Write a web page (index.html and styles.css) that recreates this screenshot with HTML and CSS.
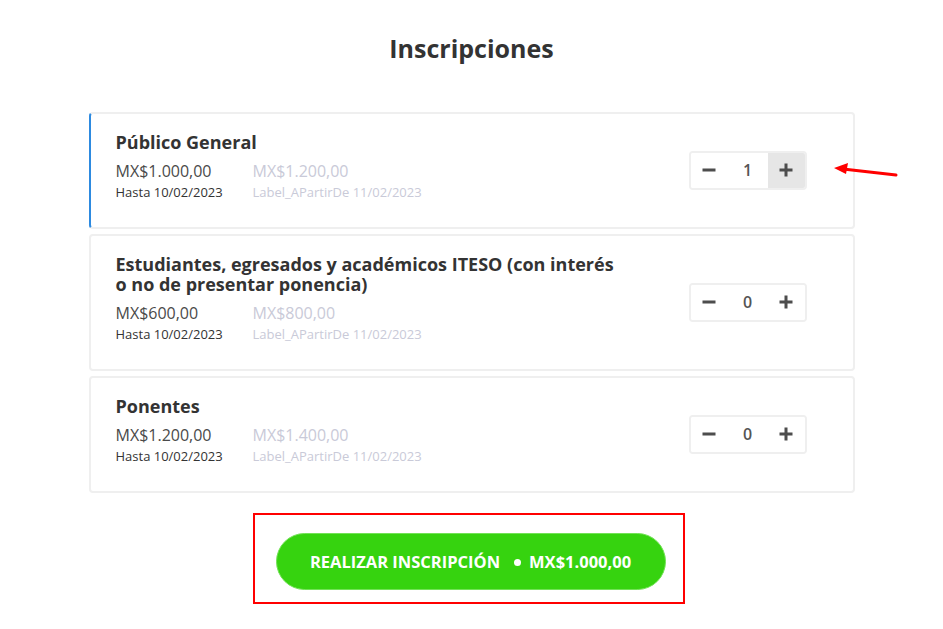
FILE: index.html
```html
<!DOCTYPE html>
<html lang="es">
<head>
    <meta charset="UTF-8">
    <meta name="viewport" content="width=device-width, initial-scale=1.0">
    <title>Inscripciones</title>
    <link rel="stylesheet" href="styles.css">
</head>
<body>
    <div class="container">
        <h1>Inscripciones</h1>

        <!-- Lista de tipos de boleto -->
        <div class="tickets">
            <div class="ticket selected">
                <div class="info">
                    <h3>Público General</h3>
                    <div class="prices">
                        <span class="price">MX$1.000,00</span>
                        <span class="price later">MX$1.200,00</span>
                    </div>
                    <div class="dates">
                        <span class="date">Hasta 10/02/2023</span>
                        <span class="date later">Label_APartirDe 11/02/2023</span>
                    </div>
                </div>
                <div class="stepper">
                    <button class="step minus"></button>
                    <span class="qty">1</span>
                    <button class="step plus active"></button>
                </div>
                <svg class="pointer" width="80" height="24" viewBox="0 0 80 24">
                    <line x1="77" y1="15" x2="24" y2="9" stroke="#f00" stroke-width="3" stroke-linecap="round"/>
                    <polygon points="15,8 29,3 27,14" fill="#f00"/>
                </svg>
            </div>

            <div class="ticket">
                <div class="info">
                    <h3>Estudiantes, egresados y académicos ITESO (con interés o no de presentar ponencia)</h3>
                    <div class="prices">
                        <span class="price">MX$600,00</span>
                        <span class="price later">MX$800,00</span>
                    </div>
                    <div class="dates">
                        <span class="date">Hasta 10/02/2023</span>
                        <span class="date later">Label_APartirDe 11/02/2023</span>
                    </div>
                </div>
                <div class="stepper">
                    <button class="step minus"></button>
                    <span class="qty">0</span>
                    <button class="step plus"></button>
                </div>
            </div>

            <div class="ticket">
                <div class="info">
                    <h3>Ponentes</h3>
                    <div class="prices">
                        <span class="price">MX$1.200,00</span>
                        <span class="price later">MX$1.400,00</span>
                    </div>
                    <div class="dates">
                        <span class="date">Hasta 10/02/2023</span>
                        <span class="date later">Label_APartirDe 11/02/2023</span>
                    </div>
                </div>
                <div class="stepper">
                    <button class="step minus"></button>
                    <span class="qty">0</span>
                    <button class="step plus"></button>
                </div>
            </div>
        </div>

        <!-- Boton de pago -->
        <div class="checkout">
            <div class="highlight">
                <button class="submit">REALIZAR INSCRIPCIÓN <span class="dot"></span> MX$1.000,00</button>
            </div>
        </div>
    </div>
</body>
</html>
```

FILE: styles.css
```css
body {
    font-family: "Open Sans", Arial, sans-serif;
    background-color: #ffffff;
    color: #333333;
    margin: 0;
    padding: 0;
}
.container {
    max-width: 766px;
    margin: 0 auto;
    padding-top: 32px;
}
h1 {
    text-align: center;
    font-size: 25px;
    line-height: 32px;
    font-weight: 700;
    color: #333333;
    margin: 0 0 48px 0;
}
.tickets {
    display: flex;
    flex-direction: column;
    gap: 5px;
}
.ticket {
    position: relative;
    display: flex;
    align-items: center;
    justify-content: space-between;
    border: 2px solid #efefef;
    border-radius: 4px;
    padding: 18px 46px 25px 25px;
}
.ticket.selected {
    border-left-color: #2d8ae0;
}
.info {
    max-width: 512px;
}
.info h3 {
    margin: 0 0 8px 0;
    font-size: 18px;
    line-height: 20px;
    font-weight: 700;
    color: #333333;
}
.prices, .dates {
    display: grid;
    grid-template-columns: 137px auto;
}
.price {
    font-size: 16px;
    line-height: 22px;
    color: #4a4a4a;
}
.date {
    font-size: 13px;
    line-height: 20px;
    color: #333333;
}
.later {
    color: #c9cad8;
}
.stepper {
    display: flex;
    align-items: stretch;
    border: 2px solid #efefef;
    border-radius: 4px;
    height: 35px;
    margin-top: 6px;
    overflow: hidden;
}
.step {
    position: relative;
    width: 37px;
    border: none;
    background: #ffffff;
    cursor: pointer;
    padding: 0;
}
.step.active {
    background: #e6e6e6;
}
.step::before, .plus::after {
    content: "";
    position: absolute;
    left: 50%;
    top: 50%;
    width: 13px;
    height: 3px;
    background: #4d4d4d;
    transform: translate(-50%, -50%);
}
.plus::after {
    width: 3px;
    height: 13px;
}
.qty {
    width: 40px;
    display: flex;
    align-items: center;
    justify-content: center;
    font-size: 16px;
    font-weight: 600;
    color: #555555;
}
.pointer {
    position: absolute;
    right: -46px;
    top: 46px;
}
.checkout {
    display: flex;
    justify-content: center;
    margin-top: 20px;
}
.highlight {
    border: 2px solid #ff0000;
    padding: 18px 17px 12px 21px;
    margin-right: 6px;
}
.submit {
    width: 390px;
    height: 57px;
    border-radius: 29px;
    border: 1px solid #72e256;
    background-color: #36d30f;
    color: #ffffff;
    font-family: "Open Sans", Arial, sans-serif;
    font-size: 16.5px;
    font-weight: 700;
    cursor: pointer;
    display: flex;
    align-items: center;
    justify-content: center;
    gap: 6px;
}
.dot {
    display: inline-block;
    width: 7px;
    height: 7px;
    border-radius: 50%;
    background: #ffffff;
    margin: 2px 2px 0 8px;
}
```
